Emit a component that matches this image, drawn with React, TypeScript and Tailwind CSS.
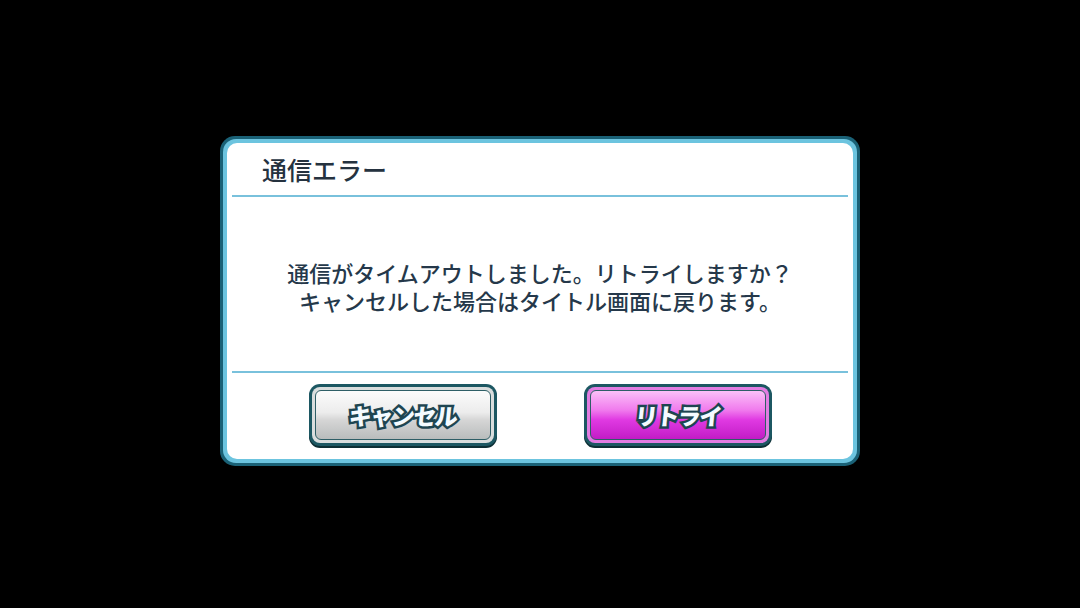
import React from 'react';

const jp = { fontFamily: '"Noto Sans CJK JP", "Noto Sans", sans-serif' };

interface GameButtonProps {
  label: string;
  variant: 'gray' | 'pink';
}

const GameButton = ({ label, variant }: GameButtonProps) => {
  const ring = variant === 'gray' ? 'bg-[#d9dddd]' : 'bg-[#e27ce2]';
  const fill =
    variant === 'gray'
      ? 'bg-[linear-gradient(to_bottom,#fbfbfb_0%,#ececec_45%,#d6d6d6_60%,#b9bcbc_100%)]'
      : 'bg-[linear-gradient(to_bottom,#fbc0f8_0%,#f07aed_40%,#e03ae2_60%,#c21cc6_100%)]';

  return (
    <button className="h-[62px] w-[188px] rounded-[11px] bg-[#1c5762] p-[3px] shadow-[0_2px_0_#0c2e34]">
      <div className={`h-full w-full rounded-[8px] p-[3px] ${ring}`}>
        <div
          className={`flex h-full w-full items-center justify-center rounded-[6px] border border-[#2e5e66] ${fill}`}
        >
          <span
            style={jp}
            className="inline-block -skew-x-6 text-[23px] font-black leading-none tracking-[-1.5px] text-[#f4fbff] [paint-order:stroke_fill] [-webkit-text-stroke:5px_#1e4551]"
          >
            {label}
          </span>
        </div>
      </div>
    </button>
  );
};

export default function App() {
  return (
    <div className="flex h-[608px] w-[1080px] items-start justify-center bg-black pt-[136px]">
      <div className="h-[330px] w-[640px] rounded-[15px] bg-[#1a6176] p-[3px]">
        <div className="h-full w-full rounded-[13px] bg-[#6cc4df] p-[4px]">
          <div className="flex h-full w-full flex-col rounded-[10px] bg-white px-[5px]">
            <div className="flex h-[54px] items-center border-b-2 border-[#79c1dc] pl-[30px] pt-[2px]">
              <h1 style={jp} className="text-[25px] font-medium text-[#25323f]">
                通信エラー
              </h1>
            </div>
            <div
              style={jp}
              className="flex h-[176px] flex-col items-center justify-center border-b-2 border-[#79c1dc] pt-[4px] text-[22px] font-medium leading-[28px] text-[#25384a]"
            >
              <p>通信がタイムアウトしました。リトライしますか？</p>
              <p>キャンセルした場合はタイトル画面に戻ります。</p>
            </div>
            <div className="flex flex-1 items-start justify-center gap-[87px] pt-[11px]">
              <GameButton label="キャンセル" variant="gray" />
              <GameButton label="リトライ" variant="pink" />
            </div>
          </div>
        </div>
      </div>
    </div>
  );
}
